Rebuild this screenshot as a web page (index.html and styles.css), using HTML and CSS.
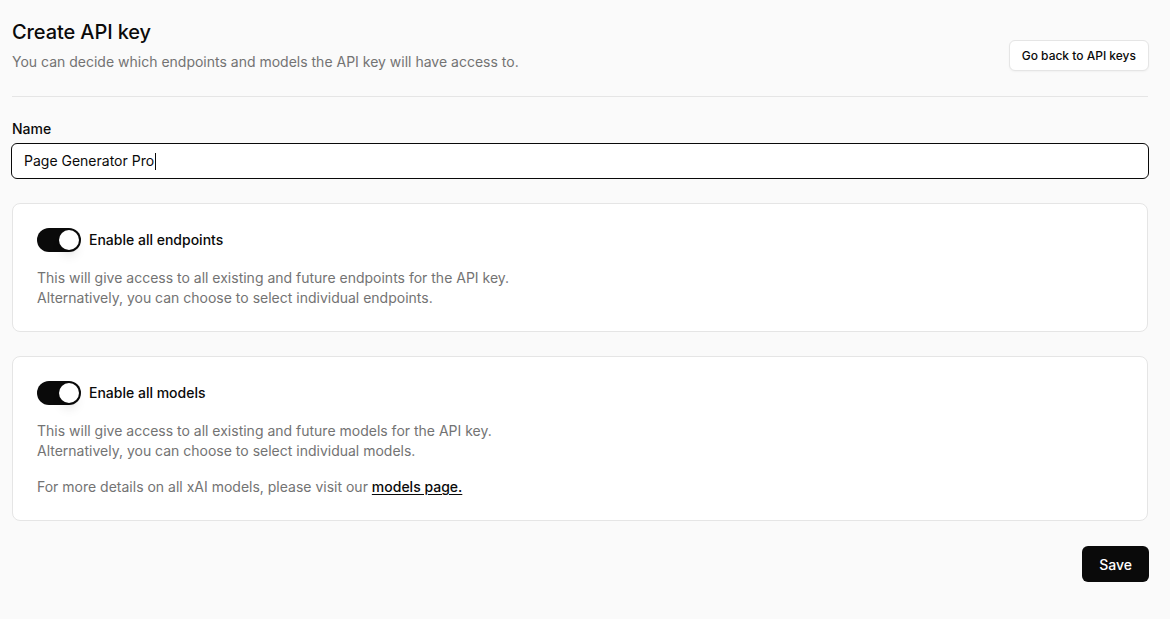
FILE: index.html
```html
<!DOCTYPE html>
<html lang="en">
<head>
<meta charset="utf-8">
<title>Create API key</title>
<link rel="stylesheet" href="styles.css">
</head>
<body>
<main class="page">
  <header class="header">
    <div class="header-text">
      <h1 class="title">Create API key</h1>
      <p class="subtitle">You can decide which endpoints and models the API key will have access to.</p>
    </div>
    <button class="btn-outline" type="button">Go back to API keys</button>
  </header>

  <section class="form">
    <div class="field">
      <label class="label" for="name">Name</label>
      <div class="input" id="name" role="textbox"><span class="input-text">Page Generator Pro</span><span class="caret"></span></div>
    </div>

    <div class="card">
      <div class="switch-row">
        <span class="switch" role="switch" aria-checked="true"><span class="thumb"></span></span>
        <span class="switch-label">Enable all endpoints</span>
      </div>
      <div class="desc">
        <p>This will give access to all existing and future endpoints for the API key.<br>Alternatively, you can choose to select individual endpoints.</p>
      </div>
    </div>

    <div class="card">
      <div class="switch-row">
        <span class="switch" role="switch" aria-checked="true"><span class="thumb"></span></span>
        <span class="switch-label">Enable all models</span>
      </div>
      <div class="desc">
        <p>This will give access to all existing and future models for the API key.<br>Alternatively, you can choose to select individual models.</p>
        <p>For more details on all xAI models, please visit our <a class="link" href="#">models page.</a></p>
      </div>
    </div>

    <div class="actions">
      <button class="btn-primary" type="button">Save</button>
    </div>
  </section>
</main>
</body>
</html>
```
FILE: styles.css
```css
* { box-sizing: border-box; }
html, body { margin: 0; padding: 0; }
body {
  background: #fafafa;
  color: #0a0a0a;
  font-family: Inter, "Noto Sans", "Liberation Sans", sans-serif;
  font-size: 14px;
  line-height: 20px;
}
.page {
  padding: 18px 22px 0 12px;
}
.header {
  display: flex;
  justify-content: space-between;
  align-items: flex-end;
  padding-bottom: 24px;
  border-bottom: 1px solid #e5e5e5;
}
.title {
  margin: 0;
  font-size: 20px;
  line-height: 28px;
  font-weight: 500;
  letter-spacing: -0.1px;
}
.subtitle {
  margin: 6px 0 0;
  color: #737373;
  font-size: 14px;
  line-height: 20px;
}
.btn-outline {
  height: 31px;
  padding: 0 12px;
  margin-bottom: 1px;
  margin-right: -1px;
  background: #ffffff;
  border: 1px solid #e5e5e5;
  border-radius: 6px;
  box-shadow: 0 1px 2px rgba(0,0,0,0.04);
  font-family: inherit;
  font-size: 12px;
  font-weight: 500;
  color: #0a0a0a;
}
.form {
  display: flex;
  flex-direction: column;
  gap: 24px;
  padding-top: 22px;
}
.field {
  display: flex;
  flex-direction: column;
  gap: 4px;
}
.label {
  font-size: 14px;
  line-height: 20px;
  font-weight: 500;
}
.input {
  display: flex;
  align-items: center;
  height: 36px;
  margin: 0 -1px;
  padding: 0 12px;
  background: #ffffff;
  border: 1px solid #0a0a0a;
  border-radius: 6px;
  font-size: 14px;
}
.caret {
  display: inline-block;
  width: 1px;
  height: 17px;
  background: #0a0a0a;
  margin-left: 1px;
}
.card {
  background: #ffffff;
  border: 1px solid #e5e5e5;
  border-radius: 8px;
  padding: 24px 24px 23px;
}
.switch-row {
  display: flex;
  align-items: center;
  gap: 8px;
}
.switch {
  display: inline-flex;
  align-items: center;
  width: 44px;
  height: 24px;
  padding: 2px;
  border-radius: 999px;
  background: #0a0a0a;
}
.thumb {
  width: 20px;
  height: 20px;
  border-radius: 50%;
  background: #ffffff;
  margin-left: 20px;
  box-shadow: 0 8px 12px -3px rgba(0,0,0,0.12), 0 3px 5px -2px rgba(0,0,0,0.08);
}
.switch-label {
  font-weight: 500;
}
.desc {
  margin-top: 16px;
  color: #737373;
  display: flex;
  flex-direction: column;
  gap: 16px;
}
.desc p { margin: 0; }
.link {
  color: #0a0a0a;
  font-weight: 500;
  text-decoration: underline;
  text-underline-offset: 2px;
}
.actions {
  display: flex;
  justify-content: flex-end;
  margin-top: 1px;
}
.btn-primary {
  height: 36px;
  padding: 0 17px;
  margin-right: -1px;
  background: #0a0a0a;
  color: #ffffff;
  border: none;
  border-radius: 6px;
  font-family: inherit;
  font-size: 14px;
  font-weight: 500;
}
```
